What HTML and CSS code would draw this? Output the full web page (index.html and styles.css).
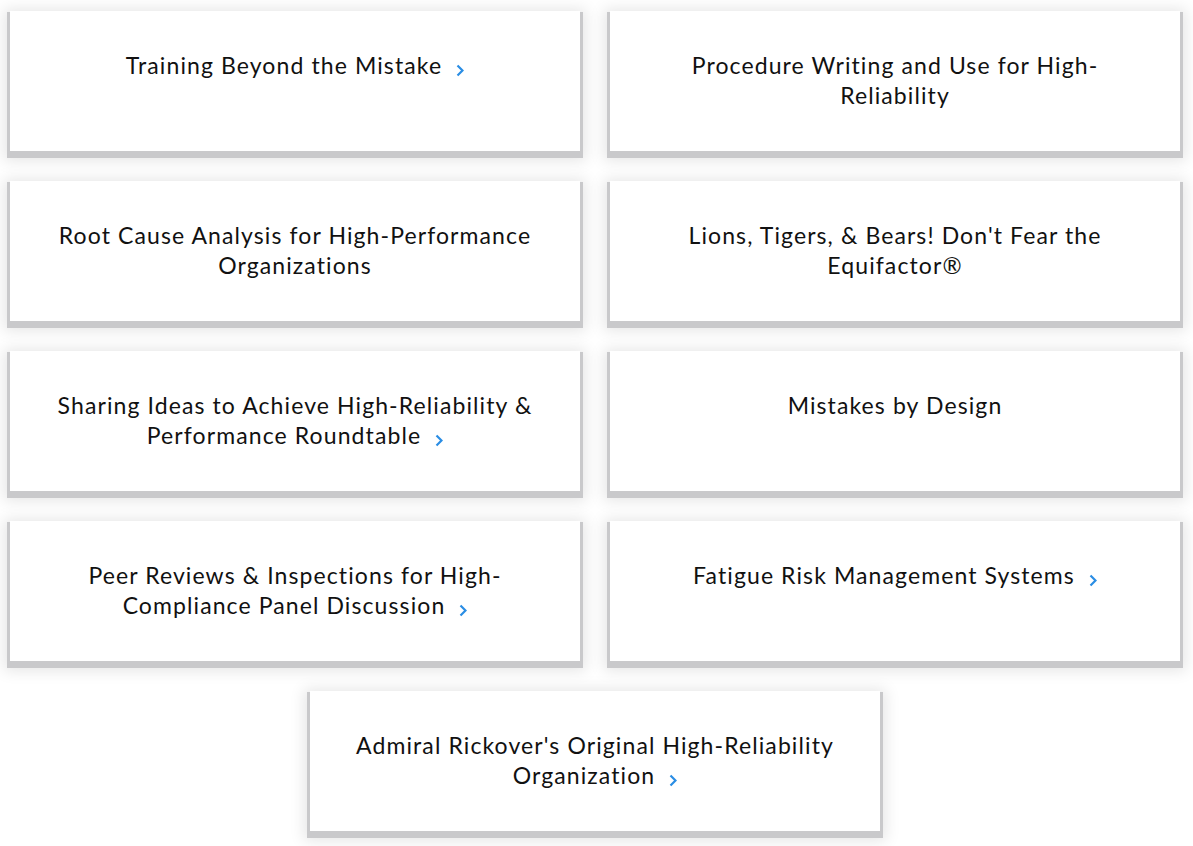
FILE: index.html
```html
<!DOCTYPE html>
<html lang="en">
<head>
<meta charset="utf-8">
<title>Sessions</title>
<link rel="stylesheet" href="styles.css">
</head>
<body>
<div class="grid">
  <a class="card"><span class="title">Training Beyond the Mistake<svg class="chev" viewBox="0 0 8 12"><polyline points="1.5,1 6.5,6 1.5,11"/></svg></span></a>
  <a class="card"><span class="title">Procedure Writing and Use for High-Reliability</span></a>
  <a class="card"><span class="title">Root Cause Analysis for High-Performance Organizations</span></a>
  <a class="card"><span class="title">Lions, Tigers, &amp; Bears! Don't Fear the Equifactor®</span></a>
  <a class="card"><span class="title">Sharing Ideas to Achieve High-Reliability &amp; Performance Roundtable<svg class="chev" viewBox="0 0 8 12"><polyline points="1.5,1 6.5,6 1.5,11"/></svg></span></a>
  <a class="card"><span class="title">Mistakes by Design</span></a>
  <a class="card"><span class="title">Peer Reviews &amp; Inspections for High-Compliance Panel Discussion<svg class="chev" viewBox="0 0 8 12"><polyline points="1.5,1 6.5,6 1.5,11"/></svg></span></a>
  <a class="card"><span class="title">Fatigue Risk Management Systems<svg class="chev" viewBox="0 0 8 12"><polyline points="1.5,1 6.5,6 1.5,11"/></svg></span></a>
  <a class="card last"><span class="title">Admiral Rickover's Original High-Reliability Organization<svg class="chev" viewBox="0 0 8 12"><polyline points="1.5,1 6.5,6 1.5,11"/></svg></span></a>
</div>
</body>
</html>
```
FILE: styles.css
```css
html, body {
  margin: 0;
  padding: 0;
  background: #fff;
}
body {
  font-family: Lato, "Open Sans", sans-serif;
  color: #111;
  min-height: 846px;
}
.grid {
  display: grid;
  grid-template-columns: 570px 570px;
  column-gap: 30px;
  row-gap: 30px;
  padding: 11px 0 15px 10px;
  width: 1170px;
}
.card {
  display: block;
  height: 140px;
  background: #fff;
  box-shadow: 0 4px 0 3px #c9c9cb, 0 4px 14px 6px rgba(0, 0, 0, 0.1);
  box-sizing: border-box;
  padding: 39px 37px 0;
  text-align: center;
  text-decoration: none;
  color: inherit;
}
.card.last {
  grid-column: 1 / span 2;
  justify-self: center;
  width: 570px;
}
.title {
  font-size: 23px;
  line-height: 30px;
  letter-spacing: 1.1px;
}
.chev {
  display: inline-block;
  width: 8px;
  height: 13px;
  margin-left: 14px;
  vertical-align: -3px;
}
.chev polyline {
  fill: none;
  stroke: #2a8de4;
  stroke-width: 2.2;
}
```
